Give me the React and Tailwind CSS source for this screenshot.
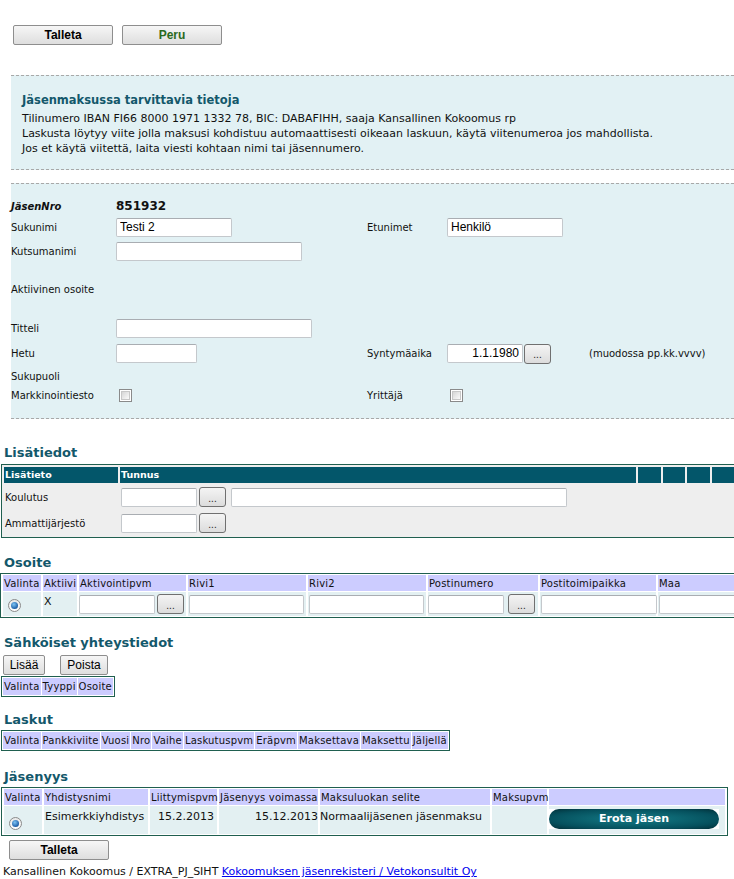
import React from "react";

const FONT = { fontFamily: '"DejaVu Sans", Verdana, sans-serif' };
const UI = { fontFamily: '"Liberation Sans", Arial, sans-serif' };

function TextInput({ w, value = "", right = false }) {
  return (
    <input
      readOnly
      value={value}
      style={UI}
      className={`h-[19px] ${w} border border-[#c4c8cc] border-t-[#a9adb2] bg-white px-[3px] text-[12px] text-black outline-none rounded-[2px] ${
        right ? "text-right" : ""
      }`}
    />
  );
}

function DotsButton() {
  return (
    <button
      style={UI}
      className="h-[20px] w-[27px] rounded-[3px] border border-[#707070] bg-[linear-gradient(#f4f4f4,#dcdcdc)] text-[10px] leading-none text-[#222] pt-[3px]"
    >
      ...
    </button>
  );
}

function GrayButton({ children, className = "", bold = false, green = false }) {
  return (
    <button
      style={UI}
      className={`h-[20px] rounded-[2px] border border-[#8e8e8e] bg-[linear-gradient(#f6f6f6,#dedede)] text-[12px] leading-none ${
        bold ? "font-bold" : ""
      } ${green ? "text-[#2a6a1e]" : "text-black"} ${className}`}
    >
      {children}
    </button>
  );
}

function Checkbox() {
  return (
    <span className="inline-block h-[13px] w-[13px] border border-[#8a8a8a] bg-white p-[1px]">
      <span className="block h-full w-full border border-[#c8c8c8] bg-[linear-gradient(135deg,#d6d6d6,#fbfbfb)]" />
    </span>
  );
}

function Radio() {
  return (
    <span className="inline-flex h-[13px] w-[13px] items-center justify-center rounded-full border border-[#8a8a8a] bg-[linear-gradient(#e8e8e8,#ffffff)]">
      <span className="block h-[7px] w-[7px] rounded-full bg-[radial-gradient(circle_at_40%_35%,#7cc3f4,#1e5fa8_70%,#163e73)]" />
    </span>
  );
}

function Heading({ children }) {
  return <h2 className="h-[20px] pl-[4px] text-[13px] font-bold leading-[20px] text-[#13586b]">{children}</h2>;
}

function HeadCells({ items }) {
  return items.map((t, i) => (
    <th key={i} className="whitespace-nowrap px-[1px] font-normal tracking-[0.2px]">
      {t}
    </th>
  ));
}

function FormRow({ h, label, value, label2, value2, bold }) {
  return (
    <div className={`flex items-center ${h}`}>
      <div className={`w-[105px] shrink-0 text-[10px] ${bold ? "font-bold italic" : ""}`}>{label}</div>
      <div className="w-[251px] shrink-0 flex items-center">{value}</div>
      <div className="w-[80px] shrink-0 text-[10px]">{label2}</div>
      <div className="flex items-center">{value2}</div>
    </div>
  );
}

export default function App() {
  return (
    <div style={FONT} className="h-[879px] w-[734px] overflow-hidden bg-white text-[#111]">
      <div className="flex gap-[9px] pl-[13px] pt-[25px]">
        <GrayButton bold className="w-[100px]">Talleta</GrayButton>
        <GrayButton bold green className="w-[100px]">Peru</GrayButton>
      </div>

      <div className="ml-[11px] mt-[30px] border-y border-dashed border-[#a8a8a8] bg-[#e2f1f4] pb-[13px] pl-[11px] pt-[17px]">
        <div className="mb-[3px] text-[11.5px] font-bold leading-[15px] text-[#13586b]">Jäsenmaksussa tarvittavia tietoja</div>
        <div className="text-[11px] leading-[15px]">
          <div>Tilinumero IBAN FI66 8000 1971 1332 78, BIC: DABAFIHH, saaja Kansallinen Kokoomus rp</div>
          <div>Laskusta löytyy viite jolla maksusi kohdistuu automaattisesti oikeaan laskuun, käytä viitenumeroa jos mahdollista.</div>
          <div>Jos et käytä viitettä, laita viesti kohtaan nimi tai jäsennumero.</div>
        </div>
      </div>

      <div className="ml-[11px] mt-[13px] border-y border-dashed border-[#a8a8a8] bg-[#e2f1f4] pb-[15px] pt-[13px]">
        <FormRow h="h-[18px]" bold label="JäsenNro" value={<span className="text-[12px] font-bold">851932</span>} />
        <FormRow
          h="h-[24px]"
          label="Sukunimi"
          value={<TextInput w="w-[116px]" value="Testi 2" />}
          label2="Etunimet"
          value2={<TextInput w="w-[116px]" value="Henkilö" />}
        />
        <FormRow h="h-[24px]" label="Kutsumanimi" value={<TextInput w="w-[186px]" />} />
        <FormRow h="h-[52px]" label="Aktiivinen osoite" />
        <FormRow h="h-[26px]" label="Titteli" value={<TextInput w="w-[196px]" />} />
        <FormRow
          h="h-[24px]"
          label="Hetu"
          value={<TextInput w="w-[81px]" />}
          label2="Syntymäaika"
          value2={
            <>
              <TextInput w="w-[76px]" value="1.1.1980" right />
              <span className="ml-[1px]">
                <DotsButton />
              </span>
              <span className="ml-[38px] text-[10px]">(muodossa pp.kk.vvvv)</span>
            </>
          }
        />
        <FormRow h="h-[22px]" label="Sukupuoli" />
        <FormRow
          h="h-[16px]"
          label="Markkinointiesto"
          value={
            <span className="ml-[3px] flex">
              <Checkbox />
            </span>
          }
          label2="Yrittäjä"
          value2={
            <span className="ml-[3px] flex">
              <Checkbox />
            </span>
          }
        />
      </div>

      <div className="mt-[24px]">
        <Heading>Lisätiedot</Heading>
        <table className="ml-[1px] mt-[1px] w-[760px] table-fixed border-separate border-spacing-[2px] border border-[#1f5f4f] bg-[#eeeeee]">
          <colgroup>
            <col className="w-[114px]" />
            <col className="w-[516px]" />
            <col className="w-[23px]" />
            <col className="w-[22px]" />
            <col className="w-[23px]" />
            <col />
          </colgroup>
          <thead>
            <tr className="h-[16px] bg-[#03566a] text-left text-[9.5px] font-bold text-white">
              <th className="px-[1px] font-bold">Lisätieto</th>
              <th className="px-[1px] font-bold">Tunnus</th>
              <th />
              <th />
              <th />
              <th />
            </tr>
          </thead>
          <tbody className="text-[10px]">
            <tr className="h-[24px]">
              <td className="pl-[1px]">Koulutus</td>
              <td colSpan={5} className="pl-[1px]">
                <div className="flex items-center">
                  <TextInput w="w-[76px]" />
                  <span className="ml-[2px]">
                    <DotsButton />
                  </span>
                  <span className="ml-[5px]">
                    <TextInput w="w-[336px]" />
                  </span>
                </div>
              </td>
            </tr>
            <tr className="h-[24px]">
              <td className="pl-[1px]">Ammattijärjestö</td>
              <td colSpan={5} className="pl-[1px]">
                <div className="flex items-center">
                  <TextInput w="w-[76px]" />
                  <span className="ml-[2px]">
                    <DotsButton />
                  </span>
                </div>
              </td>
            </tr>
          </tbody>
        </table>
      </div>

      <div className="mt-[15px]">
        <Heading>Osoite</Heading>
        <table className="w-[760px] table-fixed border-separate border-spacing-x-[2px] border-spacing-y-[1px] border border-[#1f5f4f] bg-white text-[10px]">
          <colgroup>
            <col className="w-[38px]" />
            <col className="w-[34px]" />
            <col className="w-[107px]" />
            <col className="w-[118px]" />
            <col className="w-[118px]" />
            <col className="w-[110px]" />
            <col className="w-[116px]" />
            <col />
          </colgroup>
          <thead>
            <tr className="h-[16px] bg-[#ccccff] text-left">
              <HeadCells items={["Valinta", "Aktiivi", "Aktivointipvm", "Rivi1", "Rivi2", "Postinumero", "Postitoimipaikka", "Maa"]} />
            </tr>
          </thead>
          <tbody>
            <tr className="h-[24px] bg-[#e3f0f2]">
              <td className="pl-[5px] pt-[3px]">
                <Radio />
              </td>
              <td className="pl-[1px] align-top pt-[2px] text-[11px]">X</td>
              <td>
                <div className="flex items-center">
                  <TextInput w="w-[76px]" />
                  <span className="ml-[2px]">
                    <DotsButton />
                  </span>
                </div>
              </td>
              <td className="pl-[1px]">
                <TextInput w="w-[115px]" />
              </td>
              <td className="pl-[1px]">
                <TextInput w="w-[115px]" />
              </td>
              <td>
                <div className="flex items-center">
                  <TextInput w="w-[76px]" />
                  <span className="ml-[4px]">
                    <DotsButton />
                  </span>
                </div>
              </td>
              <td className="pl-[1px]">
                <TextInput w="w-[116px]" />
              </td>
              <td className="pl-[1px]">
                <TextInput w="w-[100px]" />
              </td>
            </tr>
          </tbody>
        </table>
      </div>

      <div className="mt-[15px]">
        <Heading>Sähköiset yhteystiedot</Heading>
        <div className="ml-[3px] mt-[2px] flex gap-[15px]">
          <GrayButton className="h-[19px] w-[42px] font-normal">Lisää</GrayButton>
          <GrayButton className="h-[19px] w-[48px] font-normal">Poista</GrayButton>
        </div>
        <table className="ml-[1px] mt-[1px] border-separate border-spacing-[1px] border border-[#1f5f4f] text-[10px]">
          <thead>
            <tr className="h-[17px] bg-[#ccccff] text-left">
              <HeadCells items={["Valinta", "Tyyppi", "Osoite"]} />
            </tr>
          </thead>
        </table>
      </div>

      <div className="mt-[13px]">
        <Heading>Laskut</Heading>
        <table className="ml-[1px] border-separate border-spacing-[1px] border border-[#1f5f4f] text-[10px]">
          <thead>
            <tr className="h-[17px] bg-[#ccccff] text-left">
              <HeadCells
                items={["Valinta", "Pankkiviite", "Vuosi", "Nro", "Vaihe", "Laskutuspvm", "Eräpvm", "Maksettava", "Maksettu", "Jäljellä"]}
              />
            </tr>
          </thead>
        </table>
      </div>

      <div className="mt-[16px]">
        <Heading>Jäsenyys</Heading>
        <table className="ml-[1px] w-[727px] table-fixed border-separate border-spacing-x-[2px] border-spacing-y-[1px] border border-[#1f5f4f] text-[10px]">
          <colgroup>
            <col className="w-[38px]" />
            <col className="w-[104px]" />
            <col className="w-[67px]" />
            <col className="w-[99px]" />
            <col className="w-[170px]" />
            <col className="w-[55px]" />
            <col />
          </colgroup>
          <thead>
            <tr className="h-[16px] bg-[#ccccff] text-left">
              <HeadCells items={["Valinta", "Yhdistysnimi", "Liittymispvm", "Jäsenyys voimassa", "Maksuluokan selite", "Maksupvm", ""]} />
            </tr>
          </thead>
          <tbody className="text-[11px]">
            <tr className="h-[28px] bg-[#e3f0f2] align-top">
              <td className="pl-[5px] pt-[10px]">
                <Radio />
              </td>
              <td className="whitespace-nowrap pl-[1px] pt-[3px]">Esimerkkiyhdistys</td>
              <td className="pl-[8px] pt-[3px]">15.2.2013</td>
              <td className="pt-[3px] text-right">15.12.2013</td>
              <td className="whitespace-nowrap pt-[3px]">Normaalijäsenen jäsenmaksu</td>
              <td />
              <td className="pt-[3px]">
                <div className="w-[170px] bg-white">
                  <div className="flex h-[20px] items-center justify-center rounded-full bg-[radial-gradient(ellipse_at_center,#0e6a76_30%,#05505d_70%,#022f38)] text-[11px] font-bold text-white">
                    Erota jäsen
                  </div>
                </div>
              </td>
            </tr>
          </tbody>
        </table>
        <div className="ml-[9px] mt-[4px] flex">
          <GrayButton bold className="w-[100px]">Talleta</GrayButton>
        </div>
        <div className="ml-[3px] mt-[4px] text-[11px] leading-[15px]">
          Kansallinen Kokoomus / EXTRA_PJ_SIHT{" "}
          <a href="#" className="text-[#0000ee] underline">
            Kokoomuksen jäsenrekisteri / Vetokonsultit Oy
          </a>
        </div>
      </div>
    </div>
  );
}
